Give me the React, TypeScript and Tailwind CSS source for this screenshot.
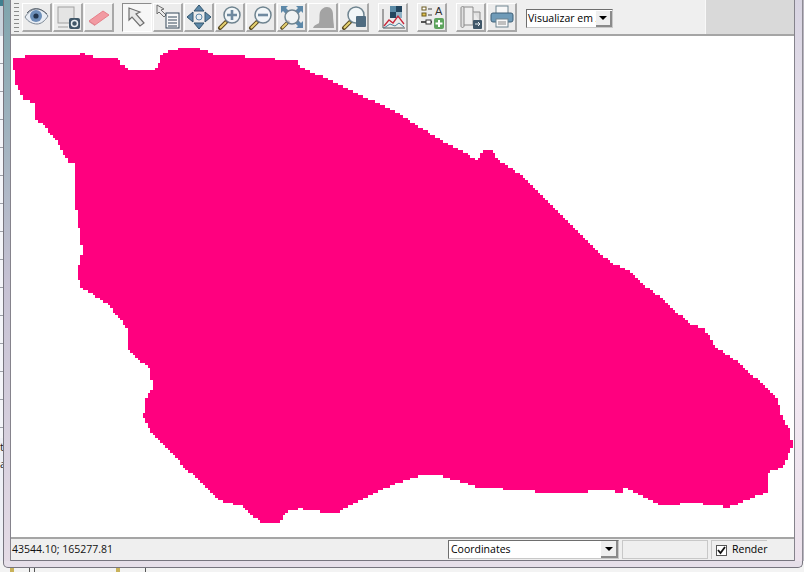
import React from 'react';

const outline: [number, number][] = [
  [12, 57], [43, 55], [63, 54], [72, 55], [83, 53], [88, 56], [108, 57], [118, 59], [121, 65], [127, 69], [155, 70],
  [158, 62], [162, 53], [168, 50], [182, 48], [197, 48], [215, 55], [240, 56], [262, 58], [295, 60], [298, 66],
  [320, 76], [350, 90], [370, 100], [395, 112], [420, 128], [440, 140], [460, 150], [475, 160], [483, 151], [492, 150],
  [497, 160], [520, 175], [545, 200], [565, 220], [590, 245], [610, 263], [627, 270], [640, 283], [663, 300], [688, 323],
  [703, 328], [715, 347], [737, 363], [760, 383], [777, 400], [782, 420], [790, 430], [792, 447], [783, 467], [768, 473],
  [767, 492], [753, 498], [727, 508], [720, 505], [693, 503], [663, 505], [647, 498], [632, 490], [623, 487], [622, 493],
  [610, 490], [578, 492], [560, 493], [520, 490], [480, 487], [440, 475], [420, 476], [385, 488], [345, 508], [337, 513],
  [310, 510], [300, 508], [287, 512], [280, 523], [263, 523], [242, 505], [228, 503], [217, 498], [207, 487], [185, 467],
  [173, 452], [150, 430], [143, 415], [147, 392], [152, 387], [150, 367], [140, 360], [128, 348], [127, 328], [120, 317],
  [107, 303], [90, 292], [82, 288], [77, 273], [82, 250], [78, 220], [75, 200], [74, 163], [68, 160], [55, 138], [42, 123],
  [35, 118], [35, 103], [23, 98], [15, 82], [13, 60],
];

// stair-step the outline so it looks like a raster layer
function stepped(points: [number, number][]) {
  const s = 2.5;
  let d = '';
  points.forEach(([x, y], i) => {
    const [nx, ny] = points[(i + 1) % points.length];
    const n = Math.max(1, Math.round(Math.max(Math.abs(nx - x), Math.abs(ny - y)) / s));
    for (let k = 0; k < n; k++) {
      const px = Math.round((x + ((nx - x) * k) / n) / s) * s;
      const py = Math.round((y + ((ny - y) * k) / n) / s) * s;
      d += d ? `H${px}V${py}` : `M${px} ${py}`;
    }
  });
  return d + 'Z';
}

function Btn({ children, active, className }: { children: React.ReactNode; active?: boolean; className?: string }) {
  return (
    <div className={`h-[29px] w-[30px] flex items-center justify-center ${active ? 'border border-t-[#8c8c8c] border-l-[#8c8c8c] border-r-white border-b-white bg-[#f7f7f7]' : 'border-r-2 border-b-2 border-r-[#a8a8a8] border-b-[#a8a8a8] border-t border-l border-t-white border-l-white bg-[#ececec]'} ${className ?? ''}`}>
      <svg width="26" height="26" viewBox="0 0 26 26">{children}</svg>
    </div>
  );
}

const Lens = ({ children }: { children?: React.ReactNode }) => (
  <>
    <path d="M3 24l7-7" stroke="#5a4a20" strokeWidth="4" strokeLinecap="round" />
    <path d="M3.5 23.5l5-5" stroke="#e6d271" strokeWidth="2" strokeLinecap="round" />
    <circle cx="15" cy="11" r="8" fill="#f2f6f8" stroke="#6f8490" strokeWidth="1.5" />
    {children}
  </>
);

export default function App() {
  return (
    <div className="w-[804px] h-[572px] overflow-hidden flex flex-col bg-[#f3f3f3] text-black" style={{ fontFamily: '"Open Sans", "Liberation Sans", sans-serif' }}>
      <div className="flex h-[561px]">
        {/* left: sliver of the window behind and the frame */}
        <div className="w-[4px] bg-[#eef0f6] border-r border-[#77757f] flex flex-col items-start text-[11px] leading-[17px] overflow-hidden">
          <div className="h-[6px] w-full bg-[#3f7f8f]" />
          <div className="h-[30px] w-full bg-[#c9d3dc]" />
          <div className="h-[402px] w-full bg-[repeating-linear-gradient(#f4f5f9_0,#f4f5f9_27px,#9da0a8_27px,#9da0a8_28px)]" />
          <div className="text-[#222]">t</div>
          <div className="text-[#222]">a</div>
        </div>
        <div className="w-[6px] bg-gradient-to-b from-[#7fa5ad] via-[#c5c1d3] to-[#e4dbe6]" />
        <div className="w-[785px] flex flex-col border-x border-[#85838c] bg-[#d9d9d9]">
          {/* toolbar */}
          <div className="h-[34px] flex">
            <div className="w-[695px] bg-[#efefef] flex items-center pl-[3px] pt-px border-r border-[#f8f8f8]">
              <div className="w-[5px] h-[29px] mr-[3px] bg-[repeating-linear-gradient(#8a8a8a_0,#8a8a8a_1px,#efefef_1px,#efefef_4px)]" />
              <Btn>
                <g transform="translate(-1 0)">
                  <path d="M2 13c4-6 8-8 12-8s8 3 11 7c-3 5-7 8-11 8s-9-2-12-7z" fill="#e8edf4" stroke="#7c8794" />
                  <circle cx="13" cy="12" r="6" fill="#6d8fb9" />
                  <circle cx="13" cy="12" r="2.6" fill="#23344d" />
                  <path d="M4 9c5-6 13-6 20 1" fill="none" stroke="#5c6570" />
                </g>
              </Btn>
              <Btn className="ml-px">
                <rect x="3" y="3" width="16" height="16" fill="#e4e4e4" stroke="#a0a0a0" />
                <path d="M3 23h10" stroke="#a0a0a0" />
                <rect x="14" y="14" width="11" height="11" rx="2" fill="#3f5668" />
                <circle cx="19.5" cy="19.500" r="3" fill="none" stroke="#e8eef2" strokeWidth="1.5" />
              </Btn>
              <Btn className="ml-px">
                <path d="M3 17L17 7l6 4-14 10-6-4z" fill="#f29aa2" stroke="#e6808a" />
                <path d="M3 17l6 4v1l-6-4z" fill="#d9848c" />
              </Btn>
              <div className="w-[8px]" />
              <Btn active>
                <path d="M5 3v12l3-3 8 9 4-3-8-9 4-2z" fill="#e8e8e8" stroke="#6e6e6e" strokeWidth="1.2" />
              </Btn>
              <Btn className="ml-px">
                <path d="M2 1v9l2-2 5 5 2-2-5-5 3-1z" fill="#e8e8e8" stroke="#6e6e6e" />
                <rect x="11" y="9" width="13" height="15" fill="#f8f8f8" stroke="#34495a" />
                <path d="M13 13h9M13 16h9M13 19h9M13 22h9" stroke="#34495a" />
              </Btn>
              <Btn className="ml-px">
                <path d="M13 1l5 6h-10zM13 25l5-6h-10zM1 13l6-5v10zM25 13l-6-5v10z" fill="#5d88a8" stroke="#33566e" />
                <circle cx="13" cy="13" r="3" fill="#e8eef2" stroke="#5d88a8" />
              </Btn>
              <Btn className="ml-px">
                <Lens><path d="M15 6v10M10 11h10" stroke="#6f8aa0" strokeWidth="2.6" /></Lens>
              </Btn>
              <Btn className="ml-px">
                <Lens><path d="M10 11h10" stroke="#6f8aa0" strokeWidth="2.6" /></Lens>
              </Btn>
              <Btn className="ml-px">
                <path d="M2 2h7l-2 2 3 3-3 3-3-3-2 2zM24 2v7l-2-2-3 3-3-3 3-3-2-2zM24 24h-7l2-2-3-3 3-3 3 3 2-2z" fill="#5d88a8" />
                <path d="M3 24l6-6" stroke="#5a4a20" strokeWidth="3.5" strokeLinecap="round" />
                <path d="M3.5 23.5l4-4" stroke="#e6d271" strokeWidth="1.8" strokeLinecap="round" />
                <circle cx="13" cy="13" r="7" fill="#f2f6f8" fillOpacity=".7" stroke="#6f8490" strokeWidth="1.5" />
              </Btn>
              <Btn className="ml-px">
                <path d="M3 24c1-3 5-4 6-5 1-5 0-7 1-11 1-3 4-5 7-5 4 0 6 3 6 8 0 5 1 9 1 13z" fill="#a3a3a3" />
              </Btn>
              <Btn className="ml-px">
                <Lens><rect x="15" y="12" width="10" height="11" rx="1" fill="#4f6b80" /></Lens>
              </Btn>
              <div className="w-[9px]" />
              <Btn>
                <rect x="10" y="2" width="6" height="6" fill="#5a8aa6" />
                <rect x="16" y="2" width="6" height="6" fill="#23465f" />
                <rect x="10" y="8" width="6" height="6" fill="#23465f" />
                <rect x="16" y="8" width="6" height="6" fill="#8fb2c6" />
                <path d="M3 5v19h22" fill="none" stroke="#555" />
                <path d="M4 22l5-6 4 3 5-7 6 8" fill="none" stroke="#c7263a" strokeWidth="1.3" />
                <path d="M4 24l6-4 5 2 4-3 5 4" fill="none" stroke="#4f7f9c" />
              </Btn>
              <div className="w-[9px]" />
              <Btn>
                <rect x="3" y="3" width="4" height="3" fill="#fff" stroke="#6b5a20" />
                <rect x="3" y="9" width="4" height="3" fill="#e1c14b" stroke="#6b5a20" />
                <path d="M9 5h4M9 11h4" stroke="#444" />
                <text x="16" y="11" fontSize="11" fontFamily="Liberation Sans" fill="#333">A</text>
                <path d="M2 18h5M12 18h1" stroke="#222" strokeWidth="1.5" />
                <rect x="7" y="16" width="5" height="4" fill="#fff" stroke="#333" />
                <rect x="15" y="14" width="10" height="11" rx="2" fill="#5da35d" />
                <path d="M20 16v7M16.5 19.5h7" stroke="#fff" strokeWidth="2" />
              </Btn>
              <div className="w-[9px]" />
              <Btn>
                <path d="M5 3h10v18H5z" fill="#efefef" stroke="#8a8a8a" />
                <path d="M3 4c0-2 3-2 3 0v18c0 2-3 2-3 0zM15 8h7v9" fill="#e0e0e0" stroke="#8a8a8a" />
                <rect x="15" y="16" width="9" height="9" rx="1" fill="#3f5668" />
                <path d="M17 20h5M20 18l2 2-2 2" fill="none" stroke="#e8eef2" />
              </Btn>
              <Btn className="ml-px">
                <rect x="7" y="2" width="12" height="9" fill="#f8f8f8" stroke="#6f8490" />
                <rect x="2" y="9" width="22" height="9" rx="2" fill="#6f9bb8" stroke="#3f6078" />
                <rect x="7" y="15" width="12" height="8" fill="#f8f8f8" stroke="#6f8490" />
                <path d="M9 18h8M9 20h8" stroke="#888" />
              </Btn>
              <div className="ml-[9px] mt-[2px] w-[87px] h-[19px] bg-white border border-t-[#6e6e6e] border-l-[#6e6e6e] border-r-[#c8c8c8] border-b-[#c8c8c8] flex items-center overflow-hidden">
                <span className="w-[69px] pl-[1px] text-[10.5px] whitespace-nowrap overflow-hidden shrink-0">Visualizar em 2</span>
                <div className="w-[16px] h-[16px] bg-[#efefef] border-r-2 border-b-2 border-r-[#8a8a8a] border-b-[#8a8a8a] flex items-center justify-center shrink-0">
                  <div className="w-0 h-0 border-x-[4px] border-x-transparent border-t-[4px] border-t-black" />
                </div>
              </div>
            </div>
          </div>
          <div className="h-[2px] bg-[#a5a5a5]" />
          {/* map canvas */}
          <div className="h-[501px] bg-white overflow-hidden">
            <svg width="783" height="501" viewBox="11 36 783 501" shapeRendering="crispEdges">
              <path d={stepped(outline)} fill="#ff007f" />
            </svg>
          </div>
          {/* status bar */}
          <div className="h-[24px] flex items-center border-t-2 border-b border-t-[#a5a5a5] border-b-[#77757f] bg-[#efefef] text-[10.5px]">
            <div className="w-[437px] pl-[1px] text-[#111]">43544.10; 165277.81</div>
            <div className="w-[171px] h-[19px] bg-white border border-t-[#6e6e6e] border-l-[#6e6e6e] border-r-[#c8c8c8] border-b-[#c8c8c8] flex items-center">
              <span className="flex-1 pl-[2px]">Coordinates</span>
              <div className="w-[17px] h-[17px] bg-[#efefef] border-r-2 border-b-2 border-r-[#8a8a8a] border-b-[#8a8a8a] flex items-center justify-center">
                <div className="w-0 h-0 border-x-[4px] border-x-transparent border-t-[4px] border-t-black" />
              </div>
            </div>
            <div className="w-[86px] h-[19px] ml-[3px] border border-[#c8c8c8]" />
            <div className="ml-[3px] pl-[4px] h-[19px] flex items-center border-l border-t border-[#c8c8c8]">
              <div className="w-[11px] h-[11px] bg-white border border-[#555] flex items-center justify-center">
                <svg width="9" height="9" viewBox="0 0 9 9"><path d="M1 4l2.500 3L8 1" fill="none" stroke="#111" strokeWidth="1.800" /></svg>
              </div>
              <span className="ml-[5px]">Render</span>
            </div>
          </div>
        </div>
        <div className="w-[7px] bg-gradient-to-b from-[#d8d4e2] via-[#f6ecf6] to-[#ece2ec]" />
        <div className="flex-1 bg-[#b9b5c0] border-l border-[#8d8b94]" />
      </div>
      {/* bottom frame and the windows behind */}
      <div className="h-[7px] ml-[3px] mr-[1px] bg-[#e6dfe9] border-x border-b border-[#77757f] rounded-b-[5px]" />
      <div className="flex-1 flex">
        <div className="ml-[10px] w-[4px] bg-[#c9b25a]" />
        <div className="ml-[15px] w-px bg-[#555]" />
        <div className="ml-[4px] w-px bg-[#555]" />
        <div className="ml-[81px] w-[4px] bg-[#c9b25a]" />
        <div className="ml-[25px] w-px bg-[#555]" />
      </div>
    </div>
  );
}
